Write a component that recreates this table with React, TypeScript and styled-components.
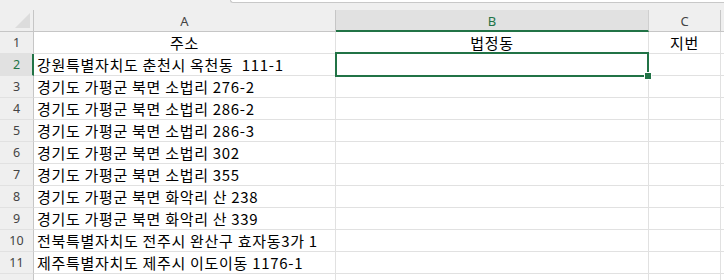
import React from 'react';
import styled, { createGlobalStyle } from 'styled-components';

const GlobalStyle = createGlobalStyle`
  html, body {
    margin: 0;
    padding: 0;
    background: #ffffff;
    overflow: hidden;
  }
  body {
    font-family: 'Noto Sans CJK KR', 'Noto Sans', sans-serif;
  }
`;

const GREEN = '#217346';
const GRID = '#e1e1e1';
const HEAD_LINE = '#c6c6c6';

const columns = [
  { key: 'A', width: 302 },
  { key: 'B', width: 313 },
  { key: 'C', width: 72 },
];

const rows = [
  ['주소', '법정동', '지번'],
  ['강원특별자치도 춘천시 옥천동  111-1', '', ''],
  ['경기도 가평군 북면 소법리 276-2', '', ''],
  ['경기도 가평군 북면 소법리 286-2', '', ''],
  ['경기도 가평군 북면 소법리 286-3', '', ''],
  ['경기도 가평군 북면 소법리 302', '', ''],
  ['경기도 가평군 북면 소법리 355', '', ''],
  ['경기도 가평군 북면 화악리 산 238', '', ''],
  ['경기도 가평군 북면 화악리 산 339', '', ''],
  ['전북특별자치도 전주시 완산구 효자동3가 1', '', ''],
  ['제주특별자치도 제주시 이도이동 1176-1', '', ''],
];

const Page = styled.div`
  width: 724px;
  height: 280px;
  background: #ffffff;
  overflow: hidden;
`;

const TopStrip = styled.div`
  display: flex;
  height: 10px;
  background: #efefef;
`;

const FormulaEdge = styled.div`
  margin-left: 230px;
  flex: 1;
  height: 2px;
  background: #ffffff;
  border-left: 1px solid #c8c8c8;
  border-bottom: 1px solid #c8c8c8;
  border-bottom-left-radius: 4px;
`;

const Sheet = styled.div`
  display: grid;
  grid-template-columns: 34px ${columns.map(c => `${c.width}px`).join(' ')} 1fr;
  grid-auto-rows: 22px;
`;

const Corner = styled.div`
  position: relative;
  background: #efefef;
  border-right: 1px solid ${HEAD_LINE};
  border-bottom: 1px solid ${HEAD_LINE};
`;

const CornerMark = styled.div`
  position: absolute;
  right: 3px;
  bottom: 3px;
  width: 0;
  height: 0;
  border-left: 15px solid transparent;
  border-bottom: 15px solid #dcdcdc;
`;

const ColHead = styled.div<{ $active?: boolean }>`
  display: flex;
  align-items: center;
  justify-content: center;
  box-sizing: border-box;
  background: ${p => (p.$active ? '#e1e1e1' : '#efefef')};
  border-right: 1px solid ${p => (p.$active ? '#cfcfcf' : HEAD_LINE)};
  border-bottom: ${p => (p.$active ? `2px solid ${GREEN}` : `1px solid ${HEAD_LINE}`)};
  color: ${p => (p.$active ? GREEN : '#444444')};
  font-family: 'Noto Sans', sans-serif;
  font-size: 13px;
  padding-top: ${p => (p.$active ? '1px' : '0')};
`;

const RowHead = styled.div<{ $active?: boolean }>`
  display: flex;
  align-items: center;
  justify-content: center;
  box-sizing: border-box;
  background: ${p => (p.$active ? '#e1e1e1' : '#efefef')};
  border-right: ${p => (p.$active ? `2px solid ${GREEN}` : `1px solid ${HEAD_LINE}`)};
  border-bottom: 1px solid ${GRID};
  color: ${p => (p.$active ? GREEN : '#444444')};
  font-family: 'Noto Sans', sans-serif;
  font-size: 12.5px;
  padding-left: ${p => (p.$active ? '1px' : '0')};
`;

const Cell = styled.div<{ $center?: boolean }>`
  position: relative;
  display: flex;
  align-items: center;
  justify-content: ${p => (p.$center ? 'center' : 'flex-start')};
  padding-left: ${p => (p.$center ? '0' : '3px')};
  border-right: 1px solid ${GRID};
  border-bottom: 1px solid ${GRID};
  color: #000000;
  font-family: 'Noto Sans CJK KR', 'Noto Sans', sans-serif;
  font-size: 15px;
  letter-spacing: 0.7px;
  white-space: pre;
  overflow: visible;
`;

const Selection = styled.div`
  position: absolute;
  left: -1px;
  top: -2px;
  right: -1px;
  bottom: -2px;
  border: 2px solid ${GREEN};
  pointer-events: none;
  z-index: 2;
`;

const FillHandle = styled.div`
  position: absolute;
  right: -4px;
  bottom: -4px;
  width: 6px;
  height: 6px;
  background: ${GREEN};
  outline: 1px solid #ffffff;
`;

const App: React.FC = () => {
  const activeCol = 'B';
  const activeRow = 2;
  return (
    <Page>
      <GlobalStyle />
      <TopStrip>
        <FormulaEdge />
      </TopStrip>
      <Sheet>
        <Corner>
          <CornerMark />
        </Corner>
        {columns.map(c => (
          <ColHead key={c.key} $active={c.key === activeCol}>
            {c.key}
          </ColHead>
        ))}
        <ColHead />
        {rows.map((row, ri) => {
          const n = ri + 1;
          return (
            <React.Fragment key={n}>
              <RowHead $active={n === activeRow}>{n}</RowHead>
              {row.map((text, ci) => (
                <Cell key={ci} $center={n === 1}>
                  {text}
                  {n === activeRow && columns[ci].key === activeCol && (
                    <Selection>
                      <FillHandle />
                    </Selection>
                  )}
                </Cell>
              ))}
              <Cell />
            </React.Fragment>
          );
        })}
        {/* partly visible row below the data */}
        <RowHead />
        {columns.map(c => (
          <Cell key={c.key} />
        ))}
        <Cell />
      </Sheet>
    </Page>
  );
};

export default App;
